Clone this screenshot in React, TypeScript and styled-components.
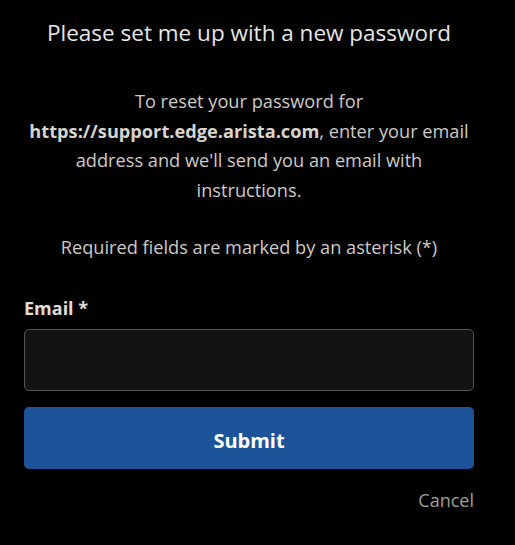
import React from 'react';
import styled, { createGlobalStyle } from 'styled-components';

const GlobalStyle = createGlobalStyle`
  html, body {
    margin: 0;
    padding: 0;
    background: #000;
  }
  body {
    font-family: "Open Sans", "Noto Sans", sans-serif;
  }
`;

const Page = styled.div`
  width: 515px;
  min-height: 545px;
  background: #000;
  box-sizing: border-box;
  padding: 16px 41px 0 24px;
`;

const Title = styled.h1`
  margin: 0;
  font-size: 22.5px;
  font-weight: 400;
  line-height: 34px;
  color: #e6e6e6;
  text-align: center;
`;

const Intro = styled.p`
  margin: 37px 0 0;
  font-size: 18.2px;
  line-height: 29.5px;
  color: #cfcac4;
  text-align: center;
  white-space: nowrap;
  strong {
    font-weight: 700;
    color: #d8d4ce;
  }
`;

const Note = styled(Intro)`
  margin-top: 28px;
`;

const Label = styled.label`
  display: block;
  margin-top: 33px;
  font-size: 18px;
  font-weight: 700;
  line-height: 24px;
  color: #e0dcd6;
`;

const Input = styled.input`
  display: block;
  box-sizing: border-box;
  width: 100%;
  height: 62px;
  margin-top: 9px;
  background: #121212;
  border: 1px solid #57524c;
  border-radius: 5px;
  color: #fff;
  font-size: 17px;
  padding: 0 12px;
  outline: none;
`;

const SubmitButton = styled.button`
  display: block;
  width: 100%;
  height: 62px;
  margin-top: 16px;
  padding: 5px 0 0;
  background: #1d5399;
  border: none;
  border-radius: 5px;
  color: #fff;
  font-family: inherit;
  font-size: 20px;
  font-weight: 700;
  cursor: pointer;
`;

const Footer = styled.div`
  display: flex;
  justify-content: flex-end;
  margin-top: 18px;
`;

const CancelLink = styled.a`
  font-size: 18px;
  line-height: 26px;
  color: #a59e96;
  text-decoration: none;
`;

const App = () => {
  return (
    <>
      <GlobalStyle />
      <Page>
        <Title>Please set me up with a new password</Title>
        <Intro>
          To reset your password for<br />
          <strong>https://support.edge.arista.com</strong>, enter your email<br />
          address and we'll send you an email with<br />
          instructions.
        </Intro>
        <Note>Required fields are marked by an asterisk (*)</Note>
        <Label htmlFor="email">Email *</Label>
        <Input id="email" type="email" />
        <SubmitButton type="submit">Submit</SubmitButton>
        <Footer>
          <CancelLink href="#">Cancel</CancelLink>
        </Footer>
      </Page>
    </>
  );
};

export default App;
